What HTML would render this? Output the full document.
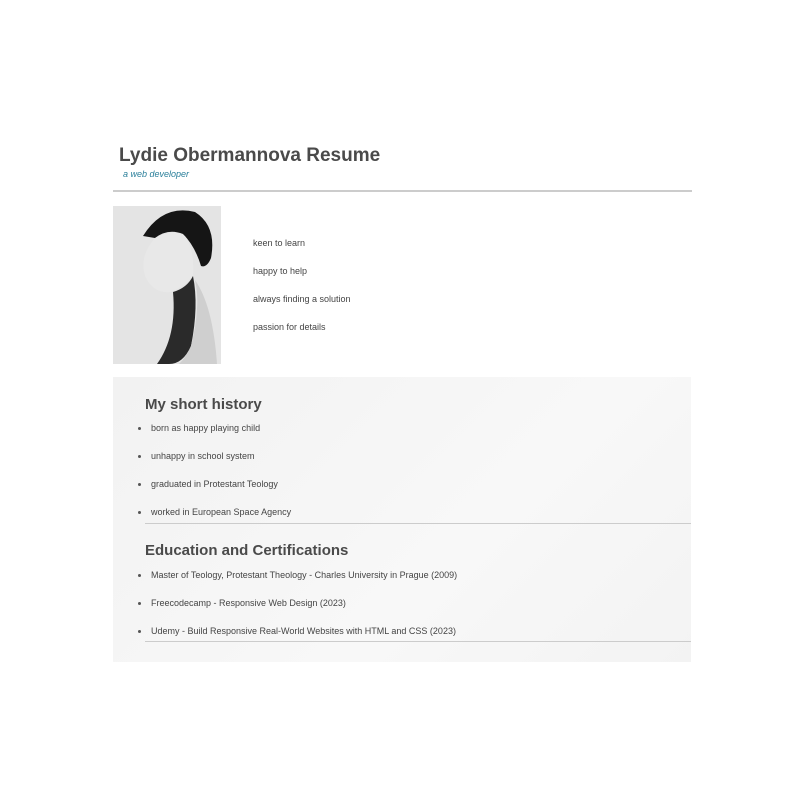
<!DOCTYPE html><html><head><style>
body{margin:0;width:800px;height:800px;background:#fff;font-family:"Liberation Sans",sans-serif;color:#444;position:relative;overflow:hidden}
.a{position:absolute;white-space:nowrap}
.t{font-size:9px;line-height:11px;color:#444}
.h{font-weight:bold;color:#4a4a4a}
.b{position:absolute;width:3px;height:3px;border-radius:50%;background:#555}
</style></head><body>
<div class="a h" style="left:119px;top:144px;font-size:19px;line-height:24px">Lydie Obermannova Resume</div>
<div class="a" style="left:123px;top:169px;font-size:9px;font-style:italic;color:#2a7f9a">a web developer</div>
<div class="a" style="left:113px;top:190px;width:579px;height:2px;background:#ccc"></div>
<svg class="a" style="left:113px;top:206px" width="108" height="158">
<rect width="108" height="158" fill="#e4e4e4"/>
<path d="M30 30 Q50 -2 82 6 Q104 20 98 52 Q94 62 88 60 Q82 40 70 28 Q55 22 42 32 Z" fill="#151515"/>
<path d="M42 32 Q60 22 72 30 Q82 45 80 70 Q72 80 58 86 Q40 88 32 70 Q26 50 42 32Z" fill="#e8e8e8"/>
<path d="M60 86 Q74 82 80 70 Q86 100 78 140 Q70 158 56 158 L44 158 Q64 130 60 86Z" fill="#2a2a2a"/>
<path d="M78 140 Q88 100 82 74 Q100 100 104 158 L66 158 Q74 150 78 140Z" fill="#cfcfcf"/>
</svg>
<div class="a t" style="left:253px;top:238px">keen to learn</div>
<div class="a t" style="left:253px;top:266px">happy to help</div>
<div class="a t" style="left:253px;top:294px">always finding a solution</div>
<div class="a t" style="left:253px;top:322px">passion for details</div>
<div class="a" style="left:113px;top:377px;width:578px;height:285px;background:linear-gradient(135deg,#f2f2f2,#f8f8f8 60%,#f3f3f3)"></div>
<div class="a h" style="left:145px;top:395px;font-size:15px;line-height:19px">My short history</div>
<div class="b" style="left:138px;top:427px"></div><div class="a t" style="left:151px;top:423px">born as happy playing child</div>
<div class="b" style="left:138px;top:455px"></div><div class="a t" style="left:151px;top:451px">unhappy in school system</div>
<div class="b" style="left:138px;top:483px"></div><div class="a t" style="left:151px;top:479px">graduated in Protestant Teology</div>
<div class="b" style="left:138px;top:511px"></div><div class="a t" style="left:151px;top:507px">worked in European Space Agency</div>
<div class="a" style="left:145px;top:523px;width:546px;height:1px;background:#ccc"></div>
<div class="a h" style="left:145px;top:541px;font-size:15px;line-height:19px">Education and Certifications</div>
<div class="b" style="left:138px;top:574px"></div><div class="a t" style="left:151px;top:570px">Master of Teology, Protestant Theology - Charles University in Prague (2009)</div>
<div class="b" style="left:138px;top:602px"></div><div class="a t" style="left:151px;top:598px">Freecodecamp - Responsive Web Design (2023)</div>
<div class="b" style="left:138px;top:630px"></div><div class="a t" style="left:151px;top:626px">Udemy - Build Responsive Real-World Websites with HTML and CSS (2023)</div>
<div class="a" style="left:145px;top:641px;width:546px;height:1px;background:#ccc"></div>
</body></html>
